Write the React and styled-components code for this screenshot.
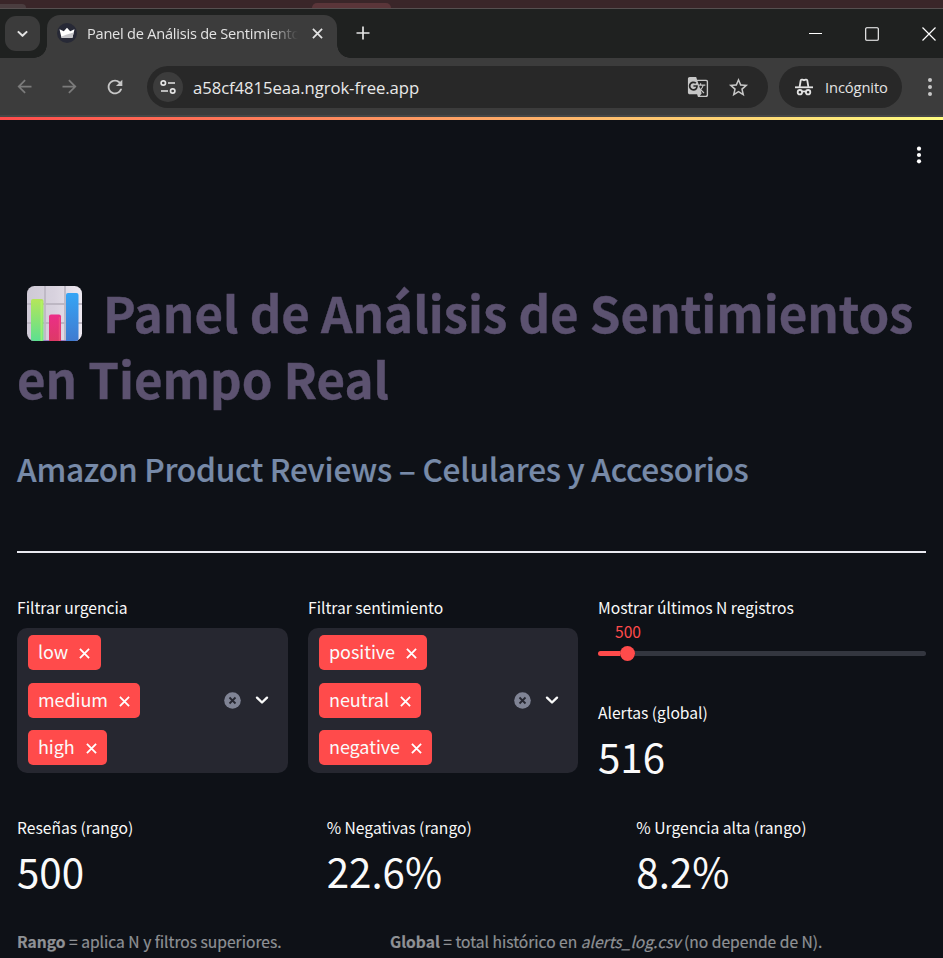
import React from "react";
import styled, { createGlobalStyle, css } from "styled-components";
import { MdArrowBack, MdArrowForward, MdRefresh, MdStarOutline, MdGTranslate } from "react-icons/md";

const GlobalStyle = createGlobalStyle`
  *, *::before, *::after { box-sizing: border-box; }
  html, body { margin: 0; padding: 0; background: #0e1117; overflow: hidden; }
  body { font-family: "Noto Sans CJK SC", "Source Sans Pro", sans-serif; color: #fafafa; }
  h1, h2, p { margin: 0; }
  svg { display: block; flex: none; }
  button { border: 0; padding: 0; background: none; color: inherit; font: inherit; }
`;

const Window = styled.div`
  width: 943px;
  height: 958px;
  display: flex;
  flex-direction: column;
  overflow: hidden;
  background: #0e1117;
`;

/* ---------- browser chrome ---------- */
const BackdropStrip = styled.div`
  height: 9px;
  flex: none;
  display: flex;
  align-items: flex-end;
  justify-content: space-between;
  background: #3a2629;
  border-bottom: 1px solid #565050;
  padding-right: 552px;
`;
const BackdropTab = styled.div`
  width: ${(p) => p.$width}px;
  height: ${(p) => p.$height}px;
  background: ${(p) => p.$color};
  border-radius: ${(p) => p.$radius};
`;
const TitleBar = styled.div`
  height: 49px;
  flex: none;
  display: flex;
  align-items: flex-start;
  background: #1f2120;
  padding: 6px 0 0 5px;
`;
const TabSearch = styled.button`
  width: 35px;
  height: 35px;
  margin-top: 1px;
  border-radius: 11px;
  background: #3b3b3b;
  display: flex;
  align-items: center;
  justify-content: center;
`;
const Tab = styled.div`
  position: relative;
  width: 290px;
  height: 43px;
  margin-left: 7px;
  padding: 0 14px 7px 10px;
  border-radius: 13px 13px 0 0;
  background: #3c3c3c;
  display: flex;
  align-items: center;

  &::before, &::after {
    content: "";
    position: absolute;
    bottom: 0;
    width: 13px;
    height: 13px;
  }
  &::before { left: -13px; background: radial-gradient(circle at 0 0, transparent 12.5px, #3c3c3c 13px); }
  &::after { right: -13px; background: radial-gradient(circle at 100% 0, transparent 12.5px, #3c3c3c 13px); }
`;
const TabTitle = styled.span`
  width: 222px;
  margin: 0 0 1px 10px;
  white-space: nowrap;
  font: 14.6px/22px "Open Sans", "Noto Sans", sans-serif;
  letter-spacing: -0.24px;
  color: #e3e3e3;
  mask-image: linear-gradient(90deg, #000 182px, transparent 211px);
`;
const TabClose = styled.button`
  margin-left: auto;
`;
const NewTab = styled.button`
  margin: 11px 0 0 19px;
`;
const WindowControls = styled.div`
  display: flex;
  gap: 43px;
  margin: 12px 7px 0 auto;
`;
const Toolbar = styled.div`
  height: 59px;
  flex: none;
  display: flex;
  align-items: center;
  background: #3c3c3c;
  padding: 1px 9px 0 14px;
  font-family: "Open Sans", "Noto Sans", sans-serif;
  border-bottom: 2px solid #474747;
`;
const NavButtons = styled.div`
  display: flex;
  width: 133px;
  gap: 24px;
`;
const AddressBar = styled.div`
  width: 621px;
  height: 42px;
  padding: 0 18px 0 6px;
  border-radius: 21px;
  background: #282828;
  display: flex;
  align-items: center;
`;
const SiteInfo = styled.button`
  width: 30px;
  height: 30px;
  border-radius: 50%;
  background: #3c3c3c;
  display: flex;
  align-items: center;
  justify-content: center;
`;
const Url = styled.span`
  margin-left: 10px;
  flex: 1;
  padding-top: 1px;
  font-size: 16.7px;
  line-height: 26px;
  letter-spacing: -0.07px;
  color: #e8e8e8;
`;
const AddressActions = styled.div`
  display: flex;
  align-items: center;
  gap: 18px;
  color: #c7c7c7;
`;
const IncognitoChip = styled.div`
  width: 123px;
  height: 42px;
  margin-left: 11px;
  padding-left: 16px;
  border-radius: 21px;
  background: #282828;
  display: flex;
  align-items: center;
  gap: 12px;
  font-size: 14.7px;
  letter-spacing: -0.1px;
  color: #e3e3e3;
`;
const BrowserMenu = styled.button`
  margin-left: auto;
`;
const LoadingLine = styled.div`
  height: 3px;
  flex: none;
  background: linear-gradient(90deg, #ff4b4b, #fffd80);
`;

/* ---------- dashboard ---------- */
const Page = styled.main`
  flex: 1;
  padding: 26px 17px 0;
`;
const PageMenu = styled.div`
  display: flex;
  justify-content: flex-end;
  margin-right: 3px;
  height: 18px;
`;
const Title = styled.h1`
  margin-top: 115px;
  white-space: nowrap;
  font-size: 49.2px;
  font-weight: 700;
  line-height: 66px;
  color: #5c5270;
  -webkit-text-stroke: 0.4px #5c5270;
`;
const TitleLine = styled.span`
  display: flex;
  align-items: center;
  height: 66px;
`;
const ChartBadge = styled.svg`
  width: 55px;
  height: 55px;
  margin: 2px 21px 0 10px;
`;
const Subtitle = styled.h2`
  margin-top: 35px;
  font-size: 31.6px;
  font-weight: 500;
  line-height: 44px;
  letter-spacing: -0.25px;
  white-space: nowrap;
  color: #778aa8;
  -webkit-text-stroke: 0.2px #778aa8;
`;
const Divider = styled.div`
  height: 2px;
  margin-top: 61px;
  background: #e9e9f0;
`;
const FilterGrid = styled.section`
  display: grid;
  grid-template-columns: 271px 270px 328px;
  column-gap: 20px;
  margin-top: 43px;
  height: 220px;
`;
const Column = styled.div`
  min-width: 0;
`;
const Label = styled.div`
  height: 24px;
  font-size: 15.65px;
  line-height: 24px;
  white-space: nowrap;
`;
const SelectBox = styled.div`
  height: 145px;
  margin-top: 8px;
  padding: 7px 19px 0 11px;
  border-radius: 10px;
  background: #262730;
  display: flex;
  justify-content: space-between;
`;
const TagList = styled.div`
  display: flex;
  flex-direction: column;
  align-items: flex-start;
  gap: 12.5px;
`;
const Tag = styled.span`
  height: 35px;
  padding: 0 10.5px 0 10px;
  border-radius: 5px;
  background: #ff4b4b;
  display: flex;
  align-items: center;
  gap: 11px;
  font-size: 18px;
  line-height: 33px;
  letter-spacing: -0.07px;

  svg { margin-top: 2px; }
`;
const TagText = styled.span`
  height: 35px;
`;
const SelectActions = styled.div`
  display: flex;
  align-items: center;
  gap: 14px;
  height: 130px;
`;
const SliderValue = styled.div`
  width: 60px;
  height: 20px;
  margin-top: 2px;
  text-align: center;
  font-size: 15.65px;
  line-height: 20px;
  color: #ff4b4b;
`;
const SliderTrack = styled.div`
  display: flex;
  align-items: center;
  height: 15px;
  margin-top: 4px;
`;
const TrackPart = styled.div`
  height: 5px;
  background: ${(p) => (p.$filled ? "#ff4b4b" : "#33363f")};
  border-radius: ${(p) => (p.$filled ? "3px 0 0 3px" : "0 3px 3px 0")};
  ${(p) => (p.$filled ? css`width: 22px;` : css`flex: 1;`)}
`;
const Thumb = styled.div`
  width: 15px;
  height: 15px;
  border-radius: 50%;
  background: #ff4b4b;
`;
const MetricBlock = styled.div`
  margin-top: ${(p) => p.$offset || 0}px;
`;
const MetricValue = styled.div`
  height: 60px;
  margin-top: 1px;
  font-size: 40.3px;
  line-height: 60px;
  white-space: nowrap;
`;
const MetricGrid = styled.section`
  display: grid;
  grid-template-columns: repeat(3, 1fr);
  column-gap: 20px;
`;
const Caption = styled.p`
  display: flex;
  margin-top: 28px;
  font-size: 15.6px;
  line-height: 24px;
  white-space: nowrap;
  color: #8f9195;
  -webkit-text-stroke: 0.2px #8f9195;
`;
const CaptionPart = styled.span`
  flex: none;
  width: ${(p) => p.$width || "auto"};
`;

/* ---------- icons ---------- */
const Cross = ({ size, width = 1.6, color = "#fff" }) => (
  <svg width={size} height={size} viewBox="0 0 12 12" fill="none" stroke={color} strokeWidth={width}>
    <path d="M1 1 11 11M11 1 1 11" />
  </svg>
);
const Chevron = ({ size = 14, width = 2.4, color = "#fafafa", cap = "butt" }) => (
  <svg width={size} height={size} viewBox="0 0 14 14" fill="none" stroke={color} strokeWidth={width} strokeLinecap={cap} strokeLinejoin="round">
    <path d="M2 4.7 7 9.5 12 4.7" />
  </svg>
);
const Dots = ({ color, gap, r }) => (
  <svg width="8" height="18" viewBox="0 0 8 18" fill={color}>
    <circle cx="4" cy={9 - gap} r={r} />
    <circle cx="4" cy="9" r={r} />
    <circle cx="4" cy={9 + gap} r={r} />
  </svg>
);
const CrownIcon = () => (
  <svg width="20" height="20" viewBox="0 0 20 20">
    <circle cx="10" cy="10" r="10" fill="#272936" />
    <path d="M2.500 6.200 6.800 8.200 10 4.800l3.200 3.400 4.300-2-2 8.500h-11z" fill="#fff" />
    <path d="M4.400 13.500 10 11.500 16.600 9.500 15.500 14.700h-11z" fill="#c4c4c8" />
  </svg>
);
const TuneIcon = () => (
  <svg width="16" height="16" viewBox="0 0 16 16" fill="none" stroke="#e3e3e3" strokeWidth="1.7">
    <circle cx="3.300" cy="4" r="2.200" />
    <path d="M8 4h7M1 12h7" />
    <circle cx="12.700" cy="12" r="2.200" />
  </svg>
);
const IncognitoIcon = () => (
  <svg width="18" height="18" viewBox="0 0 18 18" fill="none" stroke="#e3e3e3" strokeWidth="1.800">
    <path d="M0 9.300h18" />
    <path d="M4.600 9 5.700 2.500q.3-1.200 1.600-.8l1.700.5 1.700-.5q1.300-.4 1.600.8L13.400 9" />
    <circle cx="4.900" cy="14.200" r="2.200" />
    <circle cx="13.100" cy="14.200" r="2.200" />
    <path d="M7 13.800q2-1 4 0" />
  </svg>
);
const ClearIcon = () => (
  <svg width="17" height="17" viewBox="0 0 17 17">
    <circle cx="8.500" cy="8.500" r="8.300" fill="#808495" />
    <path d="M5.500 5.500l6 6M11.500 5.500l-6 6" stroke="#262730" strokeWidth="1.800" />
  </svg>
);
const ChartIcon = () => (
  <ChartBadge viewBox="0 0 55 55">
    <defs>
      <clipPath id="plate"><rect width="55" height="55" rx="7.500" /></clipPath>
      <linearGradient id="paper" x2="1" y2="0"><stop stopColor="#cfcad6" /><stop offset=".5" stopColor="#d8d2de" /><stop offset="1" stopColor="#eee9f1" /></linearGradient>
      <linearGradient id="green" x2="0" y2="1"><stop stopColor="#b5e65a" /><stop offset="1" stopColor="#58df93" /></linearGradient>
      <linearGradient id="pink" x2="0" y2="1"><stop stopColor="#ec2e88" /><stop offset="1" stopColor="#db3b62" /></linearGradient>
      <linearGradient id="blue" x2="0" y2="1"><stop stopColor="#35a5f5" /><stop offset="1" stopColor="#4079cf" /></linearGradient>
    </defs>
    <g clipPath="url(#plate)">
      <rect width="55" height="55" fill="url(#paper)" />
      <path d="M18 0v55M38 0v55M0 18h55M0 37h55" stroke="#bdb7c3" strokeWidth="1.800" />
      <path d="M0 54.500h55" stroke="#9b7cc2" strokeWidth="1" />
      <rect x="4" y="13" width="12.500" height="44" rx="2" fill="url(#green)" />
      <path d="M14.500 15v40" stroke="#b9fa66" strokeWidth="2" opacity=".6" />
      <rect x="22" y="28.500" width="12" height="30" rx="2" fill="url(#pink)" />
      <path d="M32.500 31v24" stroke="#f75a83" strokeWidth="1.500" opacity=".6" />
      <rect x="39" y="7" width="12.500" height="50" rx="2" fill="url(#blue)" />
    </g>
  </ChartBadge>
);

const MultiSelect = ({ label, options }) => (
  <Column>
    <Label>{label}</Label>
    <SelectBox>
      <TagList>
        {options.map((option) => (
          <Tag key={option}>
            <TagText>{option}</TagText>
            <Cross size={11} width={2} />
          </Tag>
        ))}
      </TagList>
      <SelectActions>
        <ClearIcon />
        <Chevron cap="round" />
      </SelectActions>
    </SelectBox>
  </Column>
);

const Metric = ({ label, value, offset }) => (
  <MetricBlock $offset={offset}>
    <Label>{label}</Label>
    <MetricValue>{value}</MetricValue>
  </MetricBlock>
);

export default function App() {
  return (
    <Window>
      <GlobalStyle />
      <BackdropStrip>
        <BackdropTab $width={26} $height={4} $color="#4a3d3f" $radius="0 12px 0 0" />
        <BackdropTab $width={79} $height={5} $color="#5a3539" $radius="10px 10px 0 0" />
      </BackdropStrip>
      <TitleBar>
        <TabSearch><Chevron size={13} width={2.2} color="#e3e3e3" /></TabSearch>
        <Tab>
          <CrownIcon />
          <TabTitle>Panel de Análisis de Sentimientos</TabTitle>
          <TabClose><Cross size={11} color="#e3e3e3" width={1.9} /></TabClose>
        </Tab>
        <NewTab>
          <svg width="14" height="14" viewBox="0 0 14 14" stroke="#e3e3e3" strokeWidth="1.700"><path d="M7 .5v13M.5 7h13" /></svg>
        </NewTab>
        <WindowControls>
          <svg width="13" height="14" viewBox="0 0 13 14" stroke="#fff"><path d="M0 6.500h13" /></svg>
          <svg width="14" height="14" viewBox="0 0 14 14" fill="none" stroke="#fff" strokeWidth="1.100"><rect x=".7" y=".7" width="12.600" height="12.600" rx="1" /></svg>
          <svg width="14" height="14" viewBox="0 0 14 14" stroke="#fff" strokeWidth="1.200"><path d="M.5.5l13 13M13.500.5l-13 13" /></svg>
        </WindowControls>
      </TitleBar>
      <Toolbar>
        <NavButtons>
          <MdArrowBack size={21} color="#7b7b7b" />
          <MdArrowForward size={21} color="#7b7b7b" />
          <MdRefresh size={22} color="#c7c7c7" />
        </NavButtons>
        <AddressBar>
          <SiteInfo><TuneIcon /></SiteInfo>
          <Url>a58cf4815eaa.ngrok-free.app</Url>
          <AddressActions>
            <MdGTranslate size={22} />
            <MdStarOutline size={23} />
          </AddressActions>
        </AddressBar>
        <IncognitoChip><IncognitoIcon />Incógnito</IncognitoChip>
        <BrowserMenu><Dots color="#c7c7c7" gap={7} r={2} /></BrowserMenu>
      </Toolbar>
      <LoadingLine />
      <Page>
        <PageMenu><Dots color="#fff" gap={6.3} r={2.1} /></PageMenu>
        <Title>
          <TitleLine><ChartIcon />Panel de Análisis de Sentimientos</TitleLine>
          <TitleLine>en Tiempo Real</TitleLine>
        </Title>
        <Subtitle>Amazon Product Reviews – Celulares y Accesorios</Subtitle>
        <Divider />
        <FilterGrid>
          <MultiSelect label="Filtrar urgencia" options={["low", "medium", "high"]} />
          <MultiSelect label="Filtrar sentimiento" options={["positive", "neutral", "negative"]} />
          <Column>
            <Label>Mostrar últimos N registros</Label>
            <SliderValue>500</SliderValue>
            <SliderTrack>
              <TrackPart $filled />
              <Thumb />
              <TrackPart />
            </SliderTrack>
            <Metric label="Alertas (global)" value="516" offset={40} />
          </Column>
        </FilterGrid>
        <MetricGrid>
          <Metric label="Reseñas (rango)" value="500" />
          <Metric label="% Negativas (rango)" value="22.6%" />
          <Metric label="% Urgencia alta (rango)" value="8.2%" />
        </MetricGrid>
        <Caption>
          <CaptionPart $width="373px"><b>Rango</b> = aplica N y filtros superiores.</CaptionPart>
          <CaptionPart><b>Global</b> = total histórico en <i>alerts_log.csv</i> (no depende de N).</CaptionPart>
        </Caption>
      </Page>
    </Window>
  );
}
